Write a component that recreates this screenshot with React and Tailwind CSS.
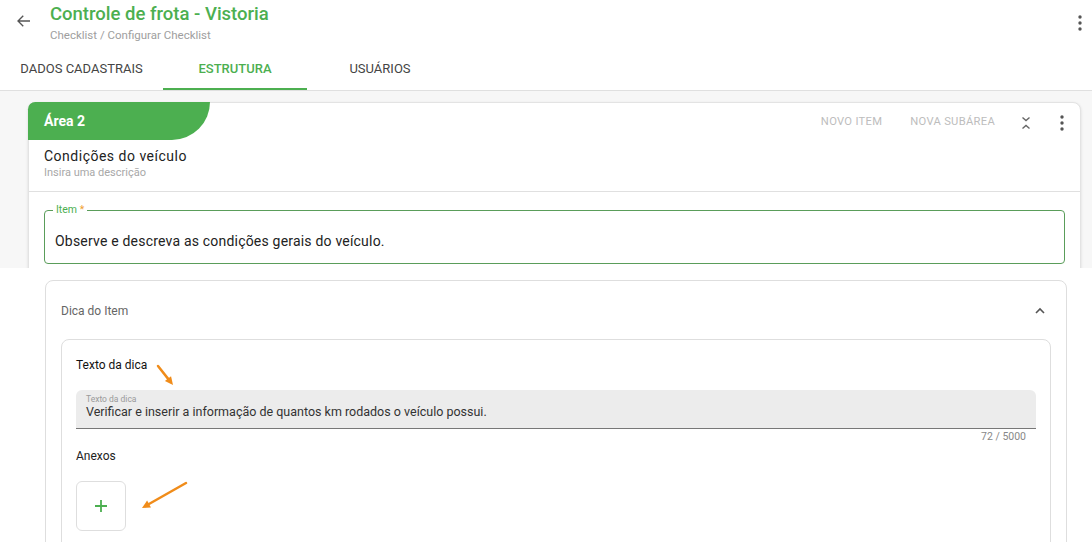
import React from 'react';

const green = '#4caf50';

const Kebab = ({ className = '' }) => (
  <svg width="4" height="16" viewBox="0 0 4 16" className={className}>
    <circle cx="2" cy="2" r="1.7" fill="#555" />
    <circle cx="2" cy="8" r="1.7" fill="#555" />
    <circle cx="2" cy="14" r="1.7" fill="#555" />
  </svg>
);

const Arrow = ({ x1, y1, x2, y2, className }) => {
  const ang = Math.atan2(y2 - y1, x2 - x1);
  const len = 9;
  const a1 = ang + Math.PI - 0.45;
  const a2 = ang + Math.PI + 0.45;
  const p = `${x2},${y2} ${x2 + len * Math.cos(a1)},${y2 + len * Math.sin(a1)} ${x2 + len * Math.cos(a2)},${y2 + len * Math.sin(a2)}`;
  return (
    <svg className={className} width="1092" height="542" viewBox="0 0 1092 542">
      <line x1={x1} y1={y1} x2={x2 - 4 * Math.cos(ang)} y2={y2 - 4 * Math.sin(ang)} stroke="#f08c1a" strokeWidth="2.5" strokeLinecap="round" />
      <polygon points={p} fill="#f08c1a" />
    </svg>
  );
};

const App = () => {
  const tabs = [
    { label: 'DADOS CADASTRAIS', w: 'w-[163px]' },
    { label: 'ESTRUTURA', w: 'w-[144px]', active: true },
    { label: 'USUÁRIOS', w: 'w-[146px]' },
  ];

  return (
    <div className="relative w-[1092px] h-[542px] overflow-hidden bg-white" style={{ fontFamily: 'Roboto, "Noto Sans", sans-serif' }}>
      {/* top screenshot part */}
      <div className="h-[268px] overflow-hidden bg-[#f7f7f7]">
        <header className="bg-white h-[91px] border-b border-[#e0e0e0]">
          <div className="flex items-start h-[48px]">
            <div className="w-[50px] flex justify-center pt-[12px]">
              <svg width="18" height="18" viewBox="0 0 24 24" className="ml-[-2px]">
                <path d="M20 12H5M11 5l-7 7 7 7" fill="none" stroke="#555" strokeWidth="1.8" />
              </svg>
            </div>
            <div className="flex-1 pt-[2px]">
              <div className="text-[18.5px] leading-[24px] font-medium" style={{ color: green }}>Controle de frota - Vistoria</div>
              <div className="text-[11.5px] leading-[14px] text-[#9e9e9e] mt-[2px]">Checklist / Configurar Checklist</div>
            </div>
            <div className="pr-[10px] pt-[15px]">
              <Kebab />
            </div>
          </div>
          <nav className="flex h-[42px]">
            {tabs.map(t => (
              <div key={t.label} className={`${t.w} flex items-center justify-center text-[13px] ${t.active ? 'border-b-2 border-[#4caf50] text-[#4caf50] font-medium' : 'text-[#444]'}`}>
                <span className={t.active ? 'pt-[2px]' : ''}>{t.label}</span>
              </div>
            ))}
          </nav>
        </header>

        <div className="pl-[28px] pr-[11px] pt-[11px]">
          <div className="bg-white rounded-t-[8px] border border-[#e3e3e3] shadow-[0_1px_3px_rgba(0,0,0,0.12)]">
            <div className="flex items-center h-[37px]">
              <div className="h-[38px] w-[182px] ml-[-1px] mt-[-1px] rounded-tl-[8px] rounded-br-[42px] flex items-center pl-[16px] pt-[1px] text-white text-[14px] font-bold" style={{ backgroundColor: green }}>
                Área 2
              </div>
              <div className="flex-1" />
              <span className="text-[11.2px] text-[#bdbdbd] tracking-[0.3px] pt-[2px]">NOVO ITEM</span>
              <span className="text-[11.2px] text-[#bdbdbd] tracking-[0.3px] ml-[28px] pt-[2px]">NOVA SUBÁREA</span>
              <svg width="12" height="16" viewBox="0 0 12 16" className="ml-[25px] mt-[2px]">
                <path d="M2.5 2.5L6 5.5L9.5 2.5M2.5 13.5L6 10.5L9.5 13.5" fill="none" stroke="#666" strokeWidth="1.4" />
              </svg>
              <Kebab className="ml-[28px] mr-[16px] mt-[2px]" />
            </div>
            <div className="px-[15px] pt-[6px] pb-[11px] border-b border-[#e0e0e0]">
              <div className="text-[14px] leading-[20px] tracking-[0.5px] text-[#222]">Condições do veículo</div>
              <div className="text-[11px] leading-[14px] text-[#a8a8a8]">Insira uma descrição</div>
            </div>
            <div className="px-[15px] pt-[18px] pb-[20px]">
              <div className="relative border border-[#5a9d5a] rounded-[4px] h-[54px] flex items-center pl-[10px] pt-[8px]">
                <span className="absolute left-[8px] top-[-8px] bg-white px-[3px] text-[10.5px] leading-[14px]" style={{ color: green }}>
                  Item <span className="text-[#f0a030]">*</span>
                </span>
                <span className="text-[14px] text-[#222] tracking-[0.2px]">Observe e descreva as condições gerais do veículo.</span>
              </div>
            </div>
          </div>
        </div>
      </div>

      {/* bottom pasted part */}
      <div className="pl-[45px] pr-[25px] pt-[12px]">
        <div className="border border-[#dedede] rounded-t-[8px] h-[300px]">
          <div className="flex items-center justify-between h-[58px] pl-[15px] pr-[20px] pt-[2px]">
            <span className="text-[12px] text-[#666]">Dica do Item</span>
            <svg width="12" height="8" viewBox="0 0 12 8">
              <path d="M2 6L6 2L10 6" fill="none" stroke="#555" strokeWidth="1.6" />
            </svg>
          </div>
          <div className="ml-[15px] mr-[15px] border border-[#dedede] rounded-t-[8px] h-[250px] px-[14px] pt-[17px]">
            <div className="text-[12px] leading-[16px] font-normal text-[#111]">Texto da dica</div>
            <div className="mt-[17px] bg-[#ececec] rounded-t-[6px] border-b border-[#777] h-[39px] pl-[10px] pt-[5px]">
              <div className="text-[8.5px] leading-[9px] text-[#9a9a9a]">Texto da dica</div>
              <div className="text-[12.5px] leading-[15px] text-[#333]">Verificar e inserir a informação de quantos km rodados o veículo possui.</div>
            </div>
            <div className="text-right text-[10.5px] leading-[14px] text-[#888] pr-[10px] mt-[1px]">72 / 5000</div>
            <div className="text-[12px] leading-[16px] text-[#222] mt-[4px]">Anexos</div>
            <div className="mt-[17px] w-[50px] h-[50px] border border-[#dedede] rounded-[6px] flex items-center justify-center">
              <svg width="14" height="14" viewBox="0 0 14 14">
                <path d="M7 1V13M1 7H13" stroke={green} strokeWidth="1.8" />
              </svg>
            </div>
          </div>
        </div>
      </div>

      <Arrow x1={158} y1={366} x2={173} y2={385} className="absolute left-0 top-0 pointer-events-none" />
      <Arrow x1={186} y1={483} x2={142} y2={508} className="absolute left-0 top-0 pointer-events-none" />
    </div>
  );
};

export default App;
